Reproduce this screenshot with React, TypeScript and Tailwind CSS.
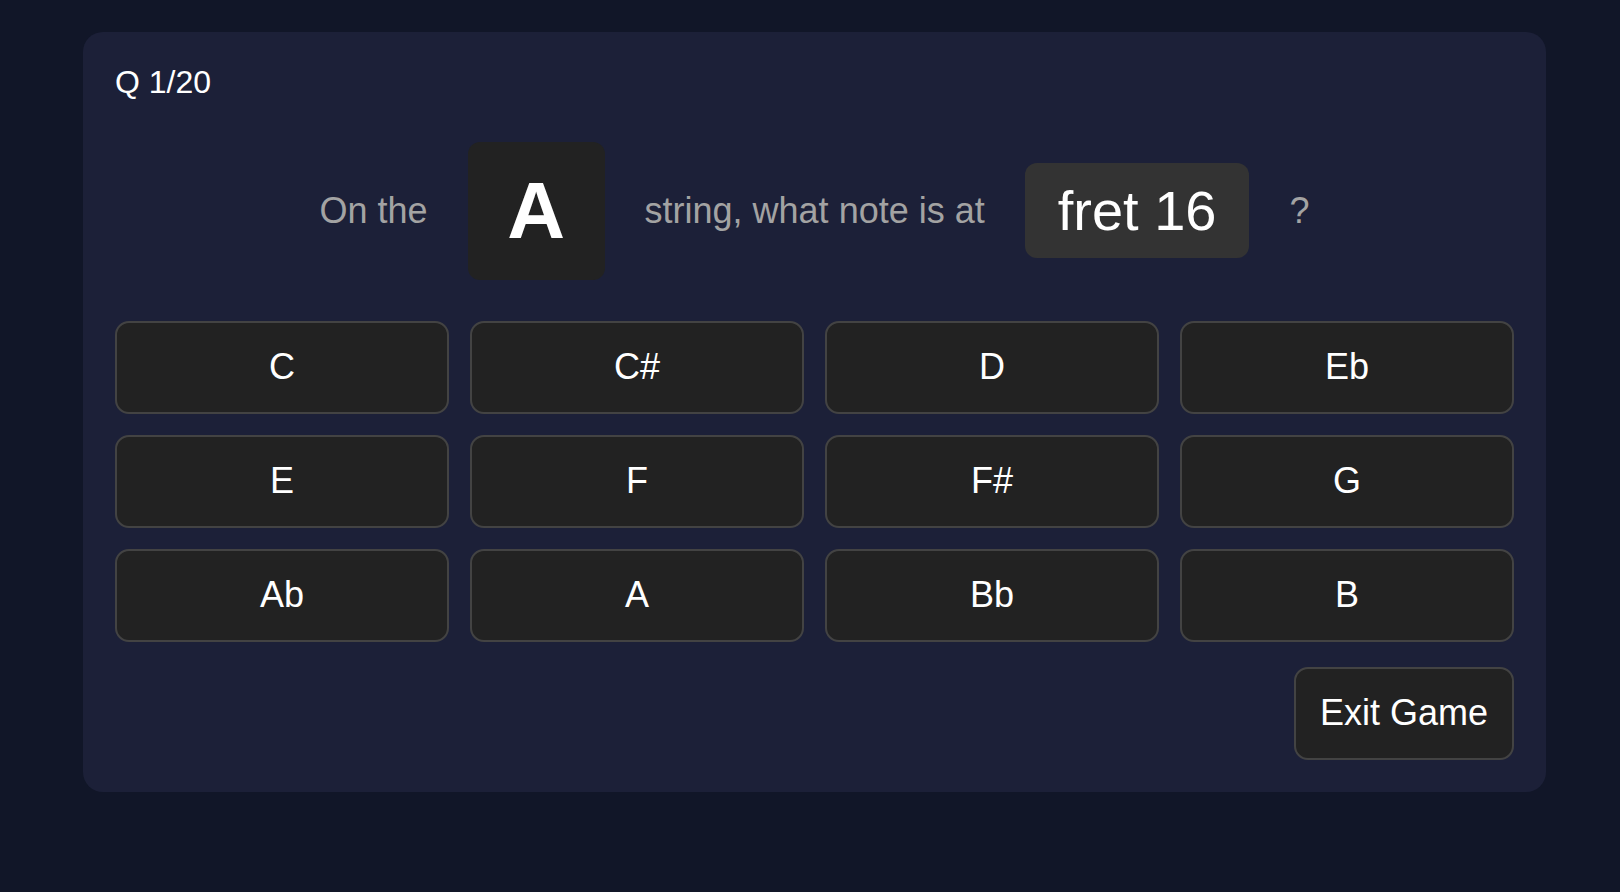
import React from 'react'

const NOTES = ['C', 'C#', 'D', 'Eb', 'E', 'F', 'F#', 'G', 'Ab', 'A', 'Bb', 'B']

export default function App() {
  return (
    <div
      className="min-h-[892px] w-full bg-[#111628] pl-[83px] pt-8 pb-8"
      style={{ fontFamily: '"Liberation Sans", Arial, Helvetica, sans-serif' }}
    >
      <div className="w-[1463px] rounded-[20px] bg-[#1c2038] p-8 flex flex-col">
        <div className="text-[32px] leading-[1.15] text-white">Q 1/20</div>

        <div className="mt-[41px] flex items-center justify-center gap-10 text-[36px] text-[#a3a3a3]">
          <span>On the</span>
          <div className="w-[137px] h-[138px] rounded-[12px] bg-[#222222] flex items-center justify-center">
            <span className="text-[80px] font-bold leading-none text-white">A</span>
          </div>
          <span>string, what note is at</span>
          <div className="h-[95px] px-[33px] rounded-[12px] bg-[#333333] flex items-center">
            <span className="text-[56px] leading-none text-white">fret 16</span>
          </div>
          <span>?</span>
        </div>

        <div className="mt-[41px] grid grid-cols-4 gap-[21px]">
          {NOTES.map((n) => (
            <button
              key={n}
              className="h-[93px] rounded-[14px] border-2 border-[#434343] bg-[#222222] text-[36px] text-white flex items-center justify-center"
            >
              {n}
            </button>
          ))}
        </div>

        <div className="mt-[25px] flex justify-end">
          <button className="h-[93px] px-[24px] rounded-[14px] border-2 border-[#434343] bg-[#222222] text-[36px] text-white flex items-center">
            Exit Game
          </button>
        </div>
      </div>
    </div>
  )
}
